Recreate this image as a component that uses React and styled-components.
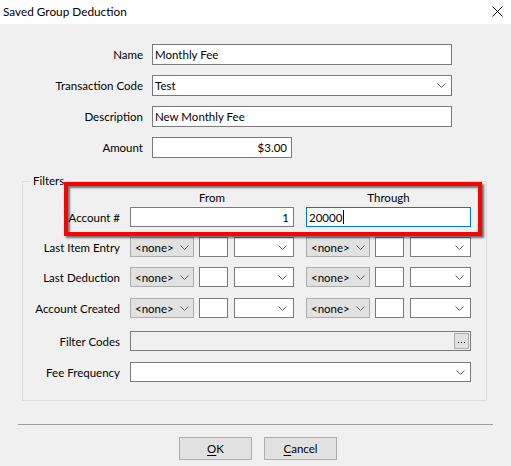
import React from "react";
import styled, { createGlobalStyle } from "styled-components";

const Global = createGlobalStyle`
  html, body { margin: 0; padding: 0; background: #f0f0f0; }
  body { font-family: Lato, "Noto Sans", sans-serif; font-size: 11.5px; color: #000; }
  * { box-sizing: border-box; }
`;

const FONT = "11.5px";

const Window = styled.div`
  width: 511px;
  height: 466px;
  display: flex;
  flex-direction: column;
  background: #f0f0f0;
  overflow: hidden;
`;

const TitleBar = styled.div`
  height: 24px;
  background: #fff;
  display: flex;
  align-items: center;
  justify-content: space-between;
  padding: 0 8px 0 3px;
  flex: 0 0 auto;
`;

const Title = styled.span`
  font-size: 11.8px;
  line-height: 16px;
  color: #000;
`;

const Body = styled.div`
  flex: 1;
  display: flex;
  flex-direction: column;
`;

const MainForm = styled.div`
  display: grid;
  grid-template-columns: 143px auto;
  column-gap: 9px;
  row-gap: 10px;
  padding-top: 20px;
  align-items: center;
  justify-items: start;
`;

const Label = styled.label`
  justify-self: end;
  text-align: right;
  font-size: ${FONT};
  line-height: 15px;
  white-space: nowrap;
`;

const TextBox = styled.div`
  width: ${(p) => p.$w}px;
  height: ${(p) => p.$h || 21}px;
  border: 1px solid ${(p) => (p.$focus ? "#0078d7" : "#7a7a7a")};
  background: ${(p) => (p.$disabled ? "#f0f0f0" : "#fff")};
  display: flex;
  align-items: center;
  justify-content: ${(p) => (p.$right ? "flex-end" : "flex-start")};
  padding: 0 ${(p) => (p.$right ? 4 : 2)}px 0 2px;
  font-size: ${FONT};
  line-height: 15px;
  white-space: nowrap;
  position: relative;
`;

const SelectBox = styled(TextBox)`
  justify-content: space-between;
  padding-right: 5px;
`;

const Chevron = () => (
  <svg width="9" height="5" viewBox="0 0 9 5" style={{ display: "block", flex: "0 0 auto" }}>
    <polyline points="0.5,0.5 4.5,4.5 8.5,0.5" fill="none" stroke="#606060" strokeWidth="1" />
  </svg>
);

const FilterGroup = styled.fieldset`
  margin: 16px 24px 0 22px;
  padding: 0 0 18px 0;
  border: 1px solid #dcdcdc;
  min-width: 0;
`;

const Legend = styled.legend`
  margin-left: 8px;
  padding: 0 2px;
  font-size: ${FONT};
  line-height: 14px;
`;

const Rows = styled.div`
  position: relative;
  display: flex;
  flex-direction: column;
`;

const FRow = styled.div`
  display: flex;
  align-items: center;
  margin-top: ${(p) => p.$mt}px;
  height: ${(p) => p.$h || 20}px;
`;

const FLabel = styled.label`
  width: 97px;
  margin-right: 10px;
  text-align: right;
  white-space: nowrap;
  font-size: ${FONT};
  line-height: 15px;
`;

const Half = styled.div`
  width: ${(p) => p.$w}px;
  margin-right: ${(p) => p.$mr || 0}px;
  display: flex;
  align-items: center;
  gap: 5px;
  height: 100%;
`;

const ColHead = styled.div`
  width: ${(p) => p.$w}px;
  margin-right: ${(p) => p.$mr || 0}px;
  text-align: center;
  font-size: ${FONT};
  line-height: 15px;
`;

const Combo = styled.div`
  width: 64px;
  height: 20px;
  flex: 0 0 auto;
  border: 1px solid #adadad;
  background: #e1e1e1;
  display: flex;
  align-items: center;
  justify-content: space-between;
  padding: 0 4px 0 4px;
  font-size: ${FONT};
  line-height: 15px;
`;

const SmallBox = styled.div`
  width: 29px;
  height: 20px;
  flex: 0 0 auto;
  border: 1px solid #7a7a7a;
  background: #fff;
  margin-right: 1px;
`;

const DropBox = styled.div`
  flex: 1;
  height: 20px;
  border: 1px solid #7a7a7a;
  background: #fff;
  display: flex;
  align-items: center;
  justify-content: flex-end;
  padding-right: 6px;
`;

const Caret = styled.span`
  display: inline-block;
  width: 1px;
  height: 14px;
  background: #000;
  margin-left: 1px;
`;

const EllipsisButton = styled.div`
  position: absolute;
  right: 1px;
  top: 1px;
  width: 15px;
  height: 16px;
  background: #e1e1e1;
  border: 1px solid #adadad;
  display: flex;
  align-items: center;
  justify-content: center;
`;

const Dots = () => (
  <svg width="7" height="2" viewBox="0 0 7 2" style={{ display: "block", marginTop: "3px" }}>
    <rect x="0" y="0" width="1" height="1" fill="#000" />
    <rect x="3" y="0" width="1" height="1" fill="#000" />
    <rect x="6" y="0" width="1" height="1" fill="#000" />
  </svg>
);

const Highlight = styled.div`
  position: absolute;
  left: 41px;
  top: -6px;
  width: 418px;
  height: 54px;
  border: 4px solid #ff0000;
  box-shadow: 2px 2px 2px rgba(0, 0, 0, 0.55), inset 2px 2px 2px rgba(0, 0, 0, 0.5);
  pointer-events: none;
`;

const Separator = styled.div`
  margin: 23px 18px 0 18px;
  height: 1px;
  background: #a0a0a0;
`;

const ButtonRow = styled.div`
  display: flex;
  justify-content: flex-start;
  gap: 12px;
  margin-top: 12px;
  padding-left: 179px;
`;

const Button = styled.button`
  width: 73px;
  height: 23px;
  background: #e1e1e1;
  border: 1px solid #adadad;
  font-family: inherit;
  font-size: ${FONT};
  line-height: 15px;
  color: #000;
  padding: 0;
  u { text-decoration: underline; text-underline-offset: 2px; }
`;

const CloseIcon = () => (
  <svg width="11" height="11" viewBox="0 0 11 11" style={{ display: "block", marginTop: "-1px" }}>
    <path d="M0.5 0.5 L10.5 10.5 M10.5 0.5 L0.5 10.5" stroke="#000" strokeWidth="1" fill="none" />
  </svg>
);

const DateRow = ({ label, mt }) => (
  <FRow $mt={mt}>
    <FLabel>{label}</FLabel>
    <Half $w={164} $mr={12}>
      <Combo>&lt;none&gt;<Chevron /></Combo>
      <SmallBox />
      <DropBox><Chevron /></DropBox>
    </Half>
    <Half $w={165}>
      <Combo>&lt;none&gt;<Chevron /></Combo>
      <SmallBox />
      <DropBox><Chevron /></DropBox>
    </Half>
  </FRow>
);

export default function App() {
  return (
    <>
      <Global />
      <Window>
        <TitleBar>
          <Title>Saved Group Deduction</Title>
          <CloseIcon />
        </TitleBar>
        <Body>
          <MainForm>
            <Label>Name</Label>
            <TextBox $w={300}>Monthly Fee</TextBox>
            <Label>Transaction Code</Label>
            <SelectBox $w={300}>Test<Chevron /></SelectBox>
            <Label>Description</Label>
            <TextBox $w={300}>New Monthly Fee</TextBox>
            <Label>Amount</Label>
            <TextBox $w={140} $right>$3.00</TextBox>
          </MainForm>

          <FilterGroup>
            <Legend>Filters</Legend>
            <Rows>
              <FRow $mt={2} $h={15}>
                <FLabel />
                <ColHead $w={164} $mr={12}>From</ColHead>
                <ColHead $w={165}>Through</ColHead>
              </FRow>
              <FRow $mt={2}>
                <FLabel>Account #</FLabel>
                <Half $w={164} $mr={12}>
                  <TextBox $w={164} $h={20} $right>1</TextBox>
                </Half>
                <Half $w={165}>
                  <TextBox $w={165} $h={20} $focus>20000<Caret /></TextBox>
                </Half>
              </FRow>
              <DateRow label="Last Item Entry" mt={10} />
              <DateRow label="Last Deduction" mt={10} />
              <DateRow label="Account Created" mt={11} />
              <FRow $mt={13}>
                <FLabel>Filter Codes</FLabel>
                <TextBox $w={341} $h={20} $disabled>
                  <EllipsisButton><Dots /></EllipsisButton>
                </TextBox>
              </FRow>
              <FRow $mt={11}>
                <FLabel>Fee Frequency</FLabel>
                <SelectBox $w={341} $h={20}><span /><Chevron /></SelectBox>
              </FRow>
              <Highlight />
            </Rows>
          </FilterGroup>

          <Separator />
          <ButtonRow>
            <Button><u>O</u>K</Button>
            <Button><u>C</u>ancel</Button>
          </ButtonRow>
        </Body>
      </Window>
    </>
  );
}
